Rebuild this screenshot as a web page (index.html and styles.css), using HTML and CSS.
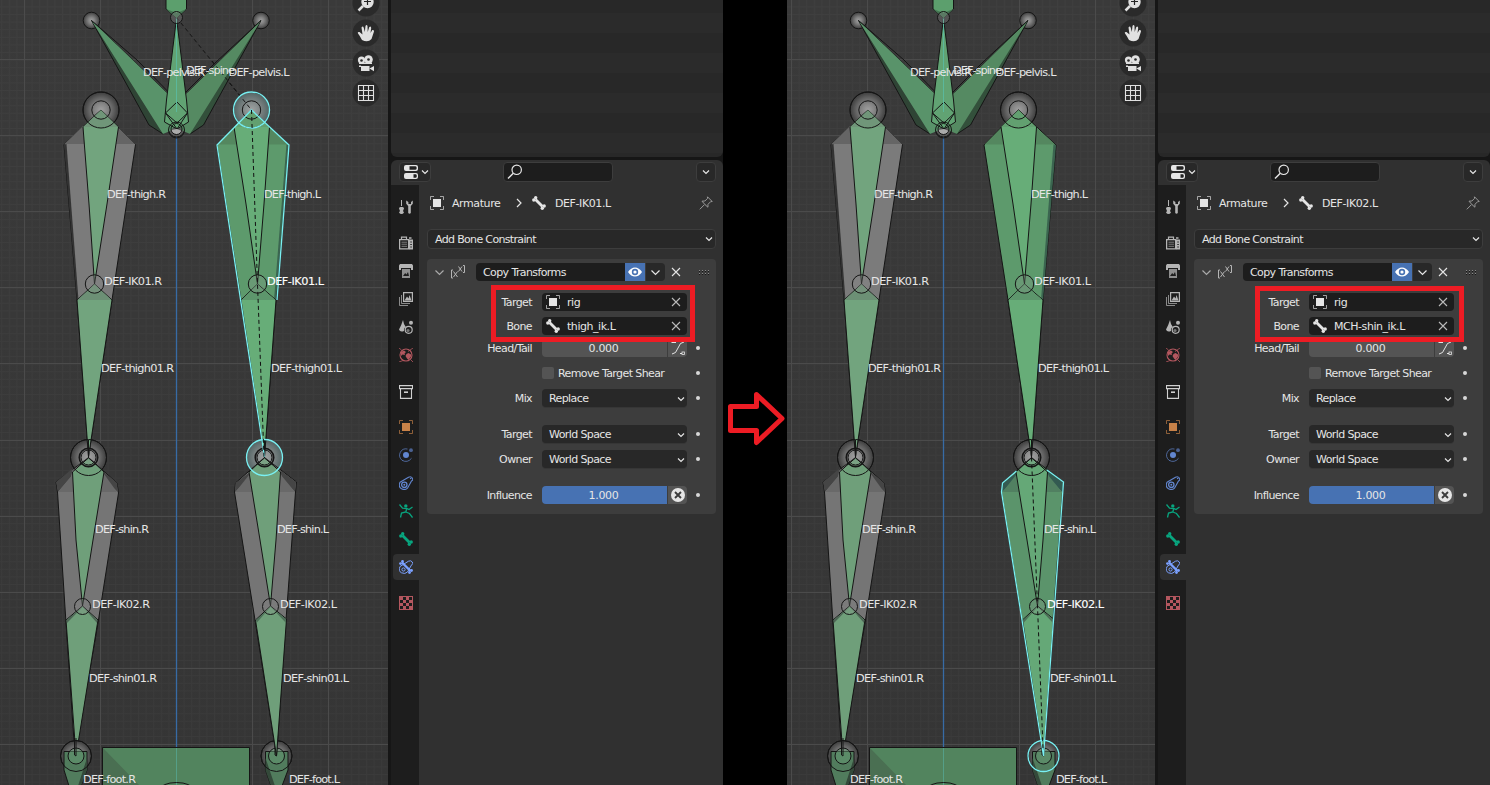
FILE: index.html
```html
<!DOCTYPE html>
<html lang="en">
<head>
<meta charset="utf-8">
<title>Copy Transforms bone constraint</title>
<link rel="stylesheet" href="styles.css">
</head>
<body>
<svg class="defs" width="0" height="0" aria-hidden="true">
  <defs>
    <radialGradient id="ball"><stop offset="0" stop-color="#a0a0a0"/><stop offset=".35" stop-color="#858585"/><stop offset=".7" stop-color="#606060"/><stop offset="1" stop-color="#3c3c3c"/></radialGradient>
    <radialGradient id="ballSel"><stop offset="0" stop-color="#a0a4a4"/><stop offset=".5" stop-color="#7e8585"/><stop offset="1" stop-color="#526464"/></radialGradient>
    <linearGradient id="ground" x2="0" y2="1"><stop offset="0" stop-color="#3a3a3a"/><stop offset="1" stop-color="#353535"/></linearGradient>
    <pattern id="fine" x="24" y="59.6" width="7.6" height="7.6" patternUnits="userSpaceOnUse"><path d="M0 .5H7.6M.5 0V7.6" stroke="#fff" stroke-opacity=".022" stroke-width="1" fill="none"/></pattern>

    <symbol id="i-object" viewBox="0 0 14 14"><path d="M.5 4V.5H4M10 .5h3.5V4M13.500 10v3.500H10M4 13.500H.5V10" fill="none" stroke="currentColor" opacity=".65"/><rect x="3" y="3" width="8" height="8" fill="currentColor"/></symbol>
    <symbol id="i-bone" viewBox="0 0 14 14"><path d="M3.500 3.500 10.500 10.500" stroke="currentColor" stroke-width="2.800"/><g fill="currentColor"><circle cx="3.700" cy="1.800" r="1.700"/><circle cx="1.800" cy="4" r="1.700"/><circle cx="10.300" cy="12.200" r="1.700"/><circle cx="12.200" cy="10" r="1.700"/></g></symbol>
    <symbol id="i-down" viewBox="0 0 8 8"><path d="M1 2.500 4 5.500 7 2.500" fill="none" stroke="currentColor" stroke-width="1.200"/></symbol>
    <symbol id="i-down-wide" viewBox="0 0 11 11"><path d="M1.500 3.500 5.500 7.500 9.500 3.500" fill="none" stroke="currentColor" stroke-width="1.200"/></symbol>
    <symbol id="i-x" viewBox="0 0 10 10"><path d="M1 1 9 9M9 1 1 9" stroke="currentColor" stroke-width="1.100"/></symbol>
    <symbol id="i-search" viewBox="0 0 16 16"><circle cx="9.700" cy="5.800" r="4.700" fill="none" stroke="currentColor" stroke-width="1.200"/><path d="M6.300 9.200 1 14.500" stroke="currentColor" stroke-width="1.500"/></symbol>
    <symbol id="i-pin" viewBox="0 0 14 14"><path d="M8.500.8 13.200 5.500 11.600 5.700 9 8.300 8.900 11.200 6 8.600 3 5.200 5.900 5 8.500 2.400zM5.600 8.500.8 13.300" fill="none" stroke="currentColor"/></symbol>
    <symbol id="i-props" viewBox="0 0 14 14"><rect width="14" height="6" rx="2" fill="currentColor"/><rect y="8" width="14" height="6" rx="2" fill="currentColor"/><path d="M5.500 1.300h6q1.200 0 1.200 1.700t-1.200 1.700h-6zM9.500 9.300h2.300q1 0 1 1.700t-1 1.700H9.500z" fill="#222"/></symbol>
    <symbol id="i-tool" viewBox="0 0 14 14"><path d="M2.500 0V6" stroke="currentColor"/><path d="M0 8.500Q0 7 1.500 7h2Q5 7 5 8.500L4 11l1 1.500Q4 14 2.500 14T0 12.500L1 11z" fill="currentColor"/><path d="M7.200.5v3.200L9.200 6v7q1.300 1.600 2.600 0V6l2-2.300V.5L12 2v2h-2.600V2z" fill="currentColor"/></symbol>
    <symbol id="i-render" viewBox="0 0 14 14"><path d="M.6 3.600h9v9.300h-9z" fill="none" stroke="currentColor" stroke-width="1.300"/><path d="M2.500 3.500V1.200h5v2.300" fill="none" stroke="currentColor" stroke-width="1.200"/><path d="M2.500 6.200h5.500M2.500 8.200h5.500M2.500 10.300h5.500" stroke="currentColor" stroke-width=".9" opacity=".7"/><path d="M10 3.500h4v10h-4z" fill="currentColor"/><path d="M11.300 6h1.500M11.300 8.500h1.500M11.300 11h1.500" stroke="#222" stroke-width="1.200"/><path d="M10 1.300h2.500v1.500H10z" fill="currentColor"/></symbol>
    <symbol id="i-output" viewBox="0 0 14 14"><path d="M1 0h12l1 1.500V6h-2V4H2v2H0V1.500z" fill="currentColor"/><path d="M3 5h8v9H3z" fill="currentColor" opacity=".75"/><path d="M4 12 6.200 9l1.200 1.500L9 8l1 4z" fill="#1d1d1d"/></symbol>
    <symbol id="i-layers" viewBox="0 0 14 14"><path d="M4.600.6h8.800v8.800H4.600z" fill="none" stroke="currentColor" stroke-width="1.200"/><path d="M5.500 8.500 8 4.500 9.500 6.500 10.500 3 12.500 8.500z" fill="currentColor"/><path d="M2.500 3v8.500H11M.5 5v8.500H9" fill="none" stroke="currentColor" stroke-width=".9" opacity=".8"/></symbol>
    <symbol id="i-scene" viewBox="0 0 14 14"><path d="M4 0Q4.500 4 6.800 7 4.500 8 5 11 1 12.500 0 9.500 2.500 5 4 0z" fill="currentColor"/><circle cx="12" cy="2.800" r="2" fill="currentColor"/><circle cx="9.700" cy="9.800" r="3.500" fill="none" stroke="currentColor" stroke-width="1.200"/><circle cx="9" cy="10.500" r="1.600" fill="#777"/></symbol>
    <symbol id="i-world" viewBox="0 0 14 14"><circle cx="7" cy="7" r="6" fill="none" stroke="currentColor" stroke-width="1.100"/><path d="M2 4 5 2.500 7 4 5.500 5.500 6 7 3.500 6.500 2 8zM7.500 6 9.500 5l2.500 1.500v2L9.500 12 8 10.500 6.500 8z" fill="currentColor"/><path d="M0 0 2.500 2M14 0 9 3.500M0 14l4-1.500M14 14l-2.500-2.500" stroke="currentColor" opacity=".8"/></symbol>
    <symbol id="i-collection" viewBox="0 0 14 14"><path d="M.5.600h13v3H.5zM1.500 4v9.400h11V4" fill="none" stroke="currentColor" stroke-width="1.100"/><path d="M5 7.200h4" stroke="currentColor" stroke-width="1.600"/></symbol>
    <symbol id="i-physics" viewBox="0 0 14 14"><circle cx="7" cy="7" r="3" fill="currentColor"/><path d="M8.500 1Q3.500 0 1.300 4.300T3 12.300q5.500 3 9.500-2" fill="none" stroke="currentColor" opacity=".7"/><circle cx="12" cy="2.200" r="1.900" fill="currentColor" opacity=".65"/></symbol>
    <symbol id="i-constraint" viewBox="0 0 14 14"><circle cx="5.300" cy="8.800" r="2.700" fill="none" stroke="currentColor" stroke-width="1.300"/><circle cx="5.300" cy="8.800" r="1" fill="currentColor"/><path d="M1 6.300 9.500 1.200Q12 0 13.300 2T12.500 5L8.500 12.200Q6 14.500 2.500 12.800T1 6.300z" fill="none" stroke="currentColor" stroke-width="1.100"/><circle cx="11.700" cy="2.500" r=".8" fill="currentColor"/></symbol>
    <symbol id="i-data" viewBox="0 0 14 14"><circle cx="6.800" cy="1.900" r="1.700" fill="currentColor"/><path d="M.5.500 3.500 4.200 7.800 4.500 10 5.500 13.500 3M7.800 4.500 6.800 8 2.500 9 1.500 13.500M6.800 8 10.500 9.500 13.500 13.500" fill="none" stroke="currentColor" stroke-width="1.300"/></symbol>
    <symbol id="i-bcon" viewBox="0 0 14 14"><path d="M1 6.500 9.500 1.200Q12 0 13.300 2T12.500 5L8.500 12Q6 14.500 2.500 12.800T1 6.500z" fill="none" stroke="currentColor" stroke-width="1"/><path d="M3 2.500 11.500 11" stroke="currentColor" stroke-width="2.400"/><g fill="currentColor"><circle cx="3.500" cy="1.500" r="1.400"/><circle cx="1.500" cy="3.600" r="1.400"/><circle cx="10.500" cy="12.500" r="1.400"/><circle cx="12.500" cy="10.500" r="1.400"/></g><circle cx="4.500" cy="9.500" r="1.600" fill="none" stroke="currentColor"/></symbol>
    <symbol id="i-texture" viewBox="0 0 14 14"><rect x=".5" y=".5" width="13" height="13" fill="none" stroke="currentColor"/><path d="M1 1h3v3H1zM7 1h3v3H7zM4 4h3v3H4zM10 4h3v3h-3zM1 7h3v3H1zM7 7h3v3H7zM4 10h3v3H4zM10 10h3v3h-3z" fill="currentColor"/></symbol>
    <symbol id="i-eye" viewBox="0 0 14 10"><path d="M0 5Q3 .5 7 .5T14 5Q11 9.500 7 9.500T0 5z" fill="#fff"/><circle cx="7" cy="5" r="3.200" fill="#4772b3"/><circle cx="7" cy="5" r="1.600" fill="#fff"/></symbol>
    <symbol id="i-var" viewBox="0 0 16 14"><path d="M3 5H1.500V13H3M13 .5H14.500V7.500H13M3.500 6.500 7.500 12M7.500 6.500 3.500 12M8.500 1.500 12 6.500M12 1.500 8.500 6.500" fill="none" stroke="currentColor"/></symbol>
    <symbol id="i-curve" viewBox="0 0 14 14"><path d="M1 13Q5 13 7 7T13 1M.5 1.500H5M9 12.500h2" fill="none" stroke="currentColor"/><rect x="11" y="11" width="2.500" height="2.500" fill="none" stroke="currentColor" stroke-width=".8"/></symbol>
    <symbol id="i-clear" viewBox="0 0 14 14"><circle cx="7" cy="7" r="7" fill="#e6e6e6"/><path d="M4 4 10 10M10 4 4 10" stroke="#3d3d3d" stroke-width="1.900"/></symbol>
    <symbol id="i-drag" viewBox="0 0 11 5"><path d="M0 .5H11M0 3.500H11" stroke="#8a8a8a" stroke-dasharray="1 2"/><path d="M0 1.500H11M0 4.500H11" stroke="#161616" stroke-dasharray="1 2"/></symbol>

    <!-- everything both views share behind the left leg -->
    <g id="backdrop">
      <rect width="388" height="785" fill="url(#ground)"/>
      <rect width="388" height="785" fill="url(#fine)"/>
      <path d="M24.500 0V785M100.500 0V785M252.500 0V785M328.500 0V785M0 59.500H388M0 135.500H388M0 211.500H388M0 287.500H388M0 363.500H388M0 440.500H388M0 516.500H388M0 592.500H388M0 668.500H388M0 744.500H388" stroke="#4b4b4b" fill="none"/>
      <path d="M176.500 0V785" stroke="#376ba5" stroke-width="1.300"/>
    </g>
    <g id="hips" stroke="#151515" stroke-width="1">
      <circle cx="91.500" cy="20.500" r="8.300" fill="url(#ball)"/><circle cx="261" cy="20.500" r="8.300" fill="url(#ball)"/>
      <circle cx="176.500" cy="129" r="8" fill="#555"/>
      <path d="M91.500 20.500 149 125 163 134 188 112 166 92Z" fill="#2f4435"/>
      <path d="M91.500 20.500 163 134 170 131 188 113 166 92Z" fill="#59936a" stroke="none"/>
      <path d="M91.500 20.500 137 60 188 112" fill="none"/>
      <path d="M261 20.500 203.500 125 190 134 166 112 188 92Z" fill="#33503b"/>
      <path d="M261 20.500 190 134 183 131 166 112 188 92Z" fill="#558a62" stroke="none"/>
      <path d="M261 20.500 215 63 166 112" fill="none"/>
      <path d="M176.500 18 186.500 100 188.500 122 177 129 164.500 122 166.500 100 Z" fill="#61a373"/>
      <path d="M165.500 113 177 102 187.500 113 177 123ZM165.500 113 177 129 187.500 113" fill="none"/>
      <path d="M176.500 18V112" stroke="#5bb89c"/>
      <path d="M166 -1V9L176.500 18 186.500 9V-1Z" fill="#5c9f6d"/>
      <path d="M166 9 176.500 13 186.500 9 176.500 18Z" fill="#447452" stroke="none"/>
      <circle cx="176.500" cy="17.500" r="6" fill="#888" fill-opacity=".35"/>
      <path d="M171 130a6 6 0 0 0 11 1L177 129Z" fill="#aaa" stroke="none"/>
      <circle cx="176.500" cy="129" r="5.500" fill="none"/><circle cx="176.500" cy="130" r="8" fill="none"/>
    </g>
    <g id="legR" stroke="#151515" stroke-width="1">
      <circle cx="101" cy="110" r="18" fill="url(#ball)"/>
      <circle cx="88.500" cy="457.500" r="18" fill="url(#ball)"/>
      <path d="M101 110 135.500 144.500 112 300 88.500 457 77 300 64 144.500Z" fill="#7b7b7b"/>
      <path d="M64 144.500 66.500 144 78.500 300 77 300Z" fill="#333" stroke="none"/>
      <path d="M64.500 144 83 126 102 144ZM135 144 118 127 102 144Z" fill="#656565" stroke="none"/>
      <path d="M101 110 118.500 127 107 204 94.500 284 89 204 83 127Z" fill="#72a47e"/>
      <path d="M101 110 118 127H83Z" fill="#709679" stroke="none"/>
      <path d="M94.500 284 112 300 88.500 457 77 300Z" fill="#72a47e"/>
      <path d="M94.500 284.500 111.500 300H77.500Z" fill="#6c9075" stroke="none"/>
      <circle cx="94.500" cy="284" r="9.200" fill="#999" fill-opacity=".2"/>
      <circle cx="101" cy="110" r="18" fill="none"/><circle cx="101" cy="110" r="9.200" fill="none"/>
    </g>
    <g id="shinR" stroke="#151515">
      <path d="M88.500 457.500 117 483 118.500 493 98 623 75 756 66 623 57.500 492 56 482Z" fill="#757575"/>
      <path d="M56 482 73 468 71 477 58 492ZM117 483 104 472 104 480 118 492Z" fill="#454545" stroke="none"/>
      <path d="M73 474 58 492H117L104 474Z" fill="#696969" stroke="none"/>
      <path d="M88.500 457.500 104 472 93 540 82.500 606 76 540 72.500 472Z" fill="#6f9f7a"/>
      <path d="M82.500 606 98 620 97 626 76 756 66 620Z" fill="#6f9f7a"/>
      <path d="M66.500 620 82.500 607 67 623ZM97 620 83 607 97 623Z" fill="#4d6555" stroke="none"/>
      <circle cx="82.500" cy="606.500" r="8" fill="#999" fill-opacity=".18"/>
      <circle cx="88.500" cy="457.500" r="9.200" fill="#aaa" fill-opacity=".2" stroke-width="1.700"/><circle cx="88.500" cy="457.500" r="7.500" fill="none"/>
      <path d="M88.500 440V458L80 465M88.500 458 97 465" fill="none"/>
      <circle cx="88.500" cy="457.500" r="18" fill="none"/>
    </g>
    <g id="feet" stroke="#151515">
      <path d="M102.500 747.500H249.500V786H102.500Z" fill="#52845e"/><path d="M103 748 140 786H103Z" fill="#4a6f52" stroke="none"/>
      <path d="M176.500 748V786" stroke="#559f88"/><ellipse cx="176.500" cy="790" rx="17" ry="7.500" fill="none"/>
      <circle cx="76" cy="756" r="15.500" fill="url(#ball)"/><circle cx="276.500" cy="756" r="15.500" fill="url(#ball)"/>
      <path d="M64 751.500H87V770L81 786H69L64 770ZM265.500 751.500H288V770L282 786H271L265.500 770Z" fill="#517c5d"/>
      <path d="M87 758V770L81 786H78ZM265.500 758V770L271 786H275Z" fill="#34493a" stroke="none"/>
      <circle cx="76" cy="756" r="8" fill="#669a73" fill-opacity=".5"/><circle cx="276.500" cy="756" r="8" fill="#669a73" fill-opacity=".5"/>
      <circle cx="76" cy="756" r="15.500" fill="none"/><circle cx="276.500" cy="756" r="15.500" fill="none"/>
      <path d="M74.500 738V755L76 756V738M275 738V755L276.500 756V738" fill="none"/>
    </g>
    <g id="thighL" stroke="#151515">
      <path d="M251.500 110 289 145 276 300 264.500 457 241 300 217 145Z" fill="#5d9a6c"/>
      <path d="M286.500 144 289 145 276 300H274Z" fill="#3b6550" stroke="none"/>
      <path d="M217.500 144.500 235 127 251 144.500ZM288 144.500 269 127 252 144.500Z" fill="#54875f" stroke="none"/>
      <path d="M251.500 110 269.500 127 264 204 257.500 284 246 204 234 127Z" fill="#67ad78"/>
      <path d="M251.500 110 269 127H234Z" fill="#62a070" stroke="none"/>
      <path d="M257.500 284 276 300 264.500 457 241 300Z" fill="#67ad78"/>
      <path d="M257.500 284.500 275.500 300H241.500Z" fill="#5d966c" stroke="none"/>
      <circle cx="257.500" cy="284" r="9.200" fill="#999" fill-opacity=".2"/>
      <circle cx="251.500" cy="110" r="18" fill="none"/><circle cx="251.500" cy="110" r="9.200" fill="none"/>
    </g>
    <g id="shinL" stroke="#151515">
      <path class="shin-outer" d="M264.500 457.500 296.500 482 295.500 492 286 620 276.500 756 255 620 234.500 492 235.500 483Z"/>
      <path d="M235.500 483 250 472 249 478 235 492ZM296 482 280 470 282 478 295 492Z" class="shin-dark" stroke="none"/>
      <path d="M249 475 235.500 492H295L281 475Z" class="shin-top" stroke="none"/>
      <path d="M264.500 457.500 280.500 472 276 540 270.500 606 260 540 249 472Z" class="shin-core"/>
      <path d="M270.500 606 286.500 619 276.500 756 255.500 620Z" class="shin-core"/>
      <path d="M256 620 270.500 607 256.500 623ZM286 619 271 607 286 623Z" fill="#4d6f58" stroke="none"/>
      <circle cx="270.500" cy="606.500" r="8" fill="#999" fill-opacity=".18"/>
    </g>
    <g id="kneeL" stroke="#151515">
      <circle cx="264.500" cy="457.500" r="9.200" fill="#aaa" fill-opacity=".2" stroke-width="1.700"/><circle cx="264.500" cy="457.500" r="7.500" fill="none"/>
      <path d="M264.500 440V458L256 465M264.500 458 273 465" fill="none"/>
    </g>
    <g id="gizmos">
      <g fill="#2a2a2a"><circle cx="366" cy="3" r="13.500"/><circle cx="366" cy="33" r="13.500"/><circle cx="366" cy="63" r="13.500"/><circle cx="366" cy="93" r="13.500"/></g>
      <g fill="#e0e0e0">
        <path d="M358.500 10.500 363 6" stroke="#e0e0e0" stroke-width="2.500"/><circle cx="367.500" cy="2" r="6.200"/><path d="M364 1.500h7M367.500-2v7" stroke="#222" stroke-width="1.200"/>
        <path d="M362 40Q360 36 358 33.500 357 31.500 359.500 32L362.500 34.500 361.500 27.500Q363 25.500 363.800 28L364.800 32 365.500 26Q366.500 24 367.500 26L367.700 32 369.300 27Q371 25.500 371.200 28L370.500 33 372.300 30Q374.300 29.500 374 31.500L371.500 39Q368 43 362 40Z"/>
        <circle cx="361.500" cy="60" r="3.600"/><circle cx="368.500" cy="59.500" r="4.300"/><path d="M359 62.500h13v1.500H359zM361 66h8.500v5H361zM369.500 68.500 374 66v5.200zM359 65.500h2v1.500h-2z"/><circle cx="361.500" cy="60.500" r="1.300" fill="#2a2a2a"/><circle cx="368.500" cy="59.500" r="1.300" fill="#2a2a2a"/>
        <path d="M358.500 85.500h15v15h-15zM363.500 85.500v15M368.500 85.500v15M358.500 90.500h15M358.500 95.500h15" fill="none" stroke="#e0e0e0" stroke-width="1.100"/>
      </g>
    </g>
    <g id="labels" class="bone-label">
      <text x="143" y="76" textLength="62">DEF-pelvis.R</text><text x="186" y="74" textLength="49">DEF-spine</text><text x="228.500" y="76" textLength="61">DEF-pelvis.L</text>
      <text x="107" y="198" textLength="59">DEF-thigh.R</text><text x="264" y="198" textLength="57">DEF-thigh.L</text>
      <text x="104" y="285" textLength="58">DEF-IK01.R</text>
      <text x="101" y="372" textLength="73">DEF-thigh01.R</text><text x="271" y="372" textLength="71">DEF-thigh01.L</text>
      <text x="95" y="533" textLength="54">DEF-shin.R</text><text x="277" y="533" textLength="52">DEF-shin.L</text>
      <text x="92" y="608" textLength="58">DEF-IK02.R</text>
      <text x="89" y="682" textLength="68">DEF-shin01.R</text><text x="283" y="682" textLength="66">DEF-shin01.L</text>
      <text x="83" y="783" textLength="53">DEF-foot.R</text><text x="289" y="783" textLength="51">DEF-foot.L</text>
    </g>
  </defs>
</svg>

<main class="comparison">
  <section class="shot">
    <svg class="viewport" viewBox="0 0 388 785">
      <use href="#backdrop"/><path d="M176.500 17.500 251.500 110" stroke="#151515" stroke-dasharray="4 3"/><use href="#hips"/>
      <use href="#legR"/><use href="#shinR"/><use href="#feet"/>
      <circle cx="251.500" cy="110" r="18" fill="url(#ballSel)"/><circle cx="264.500" cy="457.500" r="18" fill="url(#ballSel)"/>
      <path d="M212 61 251.500 110" stroke="#151515" stroke-dasharray="4 3"/>
      <use href="#thighL"/><use href="#shinL"/><use href="#kneeL"/>
      <path class="select" d="M264.500 457 217 145 251.500 110 289 145 277 300"/>
      <circle class="select" cx="251.500" cy="110" r="18"/><circle class="select" cx="264.500" cy="457.500" r="18"/>
      <path d="M251.500 110 257.500 284 264 457" stroke="#111" stroke-dasharray="4 3" fill="none"/>
      <use href="#gizmos"/><use href="#labels"/>
      <g class="bone-label"><text class="active" x="267" y="285" textLength="57">DEF-IK01.L</text><text x="280" y="608" textLength="57">DEF-IK02.L</text></g>
    </svg>
    <div class="editors">
      <div class="outliner"></div>
      <div class="properties">
        <header class="bar"><span class="btn editor-type"><svg class="ic"><use href="#i-props"/></svg><svg class="dn"><use href="#i-down"/></svg></span><span class="search"><svg><use href="#i-search"/></svg></span><span class="btn options"><svg class="dn"><use href="#i-down"/></svg></span></header>
        <div class="body">
          <nav class="tabs">
            <svg class="tool"><use href="#i-tool"/></svg><svg><use href="#i-render"/></svg><svg><use href="#i-output"/></svg><svg><use href="#i-layers"/></svg><svg><use href="#i-scene"/></svg><svg class="red"><use href="#i-world"/></svg><svg class="coll"><use href="#i-collection"/></svg><svg class="orange first"><use href="#i-object"/></svg><svg class="blue"><use href="#i-physics"/></svg><svg class="blue"><use href="#i-constraint"/></svg><svg class="green"><use href="#i-data"/></svg><svg class="green"><use href="#i-bone"/></svg><span class="current"><svg><use href="#i-bcon"/></svg></span><svg class="red last"><use href="#i-texture"/></svg>
          </nav>
          <div class="content">
            <div class="crumbs"><svg class="ic"><use href="#i-object"/></svg><span class="c1">Armature</span><svg class="gt" viewBox="0 0 6 10"><path d="M1 1 5 5 1 9" fill="none" stroke="currentColor" stroke-width="1.200"/></svg><svg class="ic"><use href="#i-bone"/></svg><span class="c2">DEF-IK01.L</span><svg class="ic pin"><use href="#i-pin"/></svg></div>
            <div class="add"><span>Add Bone Constraint</span><svg class="dn"><use href="#i-down"/></svg></div>
            <div class="panel">
              <div class="head"><svg class="fold"><use href="#i-down-wide"/></svg><svg class="var"><use href="#i-var"/></svg><span class="name">Copy Transforms</span><span class="eye"><svg><use href="#i-eye"/></svg></span><span class="more"><svg><use href="#i-down-wide"/></svg></span><svg class="x"><use href="#i-x"/></svg><svg class="drag"><use href="#i-drag"/></svg></div>
              <div class="row"><label>Target</label><span class="field"><svg class="ic"><use href="#i-object"/></svg><span>rig</span><svg class="x"><use href="#i-x"/></svg></span></div>
              <div class="row bone"><label>Bone</label><span class="field"><svg class="ic"><use href="#i-bone"/></svg><span>thigh_ik.L</span><svg class="x"><use href="#i-x"/></svg></span></div>
              <div class="row headtail"><label>Head/Tail</label><span class="num">0.000</span><span class="side"><svg class="ic"><use href="#i-curve"/></svg></span><i></i></div>
              <div class="row shear"><label></label><span class="check"></span><span class="checktext">Remove Target Shear</span><i></i></div>
              <div class="row mix"><label>Mix</label><span class="menu">Replace<svg class="dn"><use href="#i-down"/></svg></span><i></i></div>
              <div class="row target"><label>Target</label><span class="menu">World Space<svg class="dn"><use href="#i-down"/></svg></span><i></i></div>
              <div class="row owner"><label>Owner</label><span class="menu">World Space<svg class="dn"><use href="#i-down"/></svg></span><i></i></div>
              <div class="row influence"><label>Influence</label><span class="num full">1.000</span><span class="side"><svg class="ic"><use href="#i-clear"/></svg></span><i></i></div>
            </div>
          </div>
        </div>
      </div>
    </div>
    <div class="mark mark-a"></div>
  </section>

  <div class="between"><svg viewBox="0 0 64 64"><path d="M7.500 20.500H33.500V8.500L59 32.500 33.500 56.500V44.500H7.500Z" fill="none" stroke="#ed1c24" stroke-width="5" stroke-linejoin="round"/></svg></div>

  <section class="shot cropped">
    <svg class="viewport" viewBox="0 0 388 785">
      <use href="#backdrop"/><use href="#hips"/><use href="#legR"/><use href="#shinR"/><use href="#feet"/>
      <circle cx="251.500" cy="110" r="18" fill="url(#ball)" stroke="#151515"/><circle cx="264.500" cy="457.500" r="18" fill="url(#ball)" stroke="#151515"/>
      <use href="#thighL"/><g class="selected-shin"><use href="#shinL"/></g>
      <path class="select" d="M249.500 471 235.500 483 234.500 492 255 620 276.500 756 286.500 620 296.500 482 280 470"/>
      <circle class="select" cx="276.500" cy="756" r="15.500"/>
      <circle cx="264.500" cy="457.500" r="18" stroke="#151515" fill="none"/><use href="#kneeL"/>
      <path d="M264.500 457.500 270.500 606 276 748" stroke="#111" stroke-dasharray="4 3" fill="none"/>
      <use href="#gizmos"/><use href="#labels"/>
      <g class="bone-label"><text x="267" y="285" textLength="57">DEF-IK01.L</text><text class="active" x="280" y="608" textLength="57">DEF-IK02.L</text></g>
    </svg>
    <div class="editors">
      <div class="outliner"></div>
      <div class="properties">
        <header class="bar"><span class="btn editor-type"><svg class="ic"><use href="#i-props"/></svg><svg class="dn"><use href="#i-down"/></svg></span><span class="search"><svg><use href="#i-search"/></svg></span><span class="btn options"><svg class="dn"><use href="#i-down"/></svg></span></header>
        <div class="body">
          <nav class="tabs">
            <svg class="tool"><use href="#i-tool"/></svg><svg><use href="#i-render"/></svg><svg><use href="#i-output"/></svg><svg><use href="#i-layers"/></svg><svg><use href="#i-scene"/></svg><svg class="red"><use href="#i-world"/></svg><svg class="coll"><use href="#i-collection"/></svg><svg class="orange first"><use href="#i-object"/></svg><svg class="blue"><use href="#i-physics"/></svg><svg class="blue"><use href="#i-constraint"/></svg><svg class="green"><use href="#i-data"/></svg><svg class="green"><use href="#i-bone"/></svg><span class="current"><svg><use href="#i-bcon"/></svg></span><svg class="red last"><use href="#i-texture"/></svg>
          </nav>
          <div class="content">
            <div class="crumbs"><svg class="ic"><use href="#i-object"/></svg><span class="c1">Armature</span><svg class="gt" viewBox="0 0 6 10"><path d="M1 1 5 5 1 9" fill="none" stroke="currentColor" stroke-width="1.200"/></svg><svg class="ic"><use href="#i-bone"/></svg><span class="c2">DEF-IK02.L</span><svg class="ic pin"><use href="#i-pin"/></svg></div>
            <div class="add"><span>Add Bone Constraint</span><svg class="dn"><use href="#i-down"/></svg></div>
            <div class="panel">
              <div class="head"><svg class="fold"><use href="#i-down-wide"/></svg><svg class="var"><use href="#i-var"/></svg><span class="name">Copy Transforms</span><span class="eye"><svg><use href="#i-eye"/></svg></span><span class="more"><svg><use href="#i-down-wide"/></svg></span><svg class="x"><use href="#i-x"/></svg><svg class="drag"><use href="#i-drag"/></svg></div>
              <div class="row"><label>Target</label><span class="field"><svg class="ic"><use href="#i-object"/></svg><span>rig</span><svg class="x"><use href="#i-x"/></svg></span></div>
              <div class="row bone"><label>Bone</label><span class="field"><svg class="ic"><use href="#i-bone"/></svg><span>MCH-shin_ik.L</span><svg class="x"><use href="#i-x"/></svg></span></div>
              <div class="row headtail"><label>Head/Tail</label><span class="num">0.000</span><span class="side"><svg class="ic"><use href="#i-curve"/></svg></span><i></i></div>
              <div class="row shear"><label></label><span class="check"></span><span class="checktext">Remove Target Shear</span><i></i></div>
              <div class="row mix"><label>Mix</label><span class="menu">Replace<svg class="dn"><use href="#i-down"/></svg></span><i></i></div>
              <div class="row target"><label>Target</label><span class="menu">World Space<svg class="dn"><use href="#i-down"/></svg></span><i></i></div>
              <div class="row owner"><label>Owner</label><span class="menu">World Space<svg class="dn"><use href="#i-down"/></svg></span><i></i></div>
              <div class="row influence"><label>Influence</label><span class="num full">1.000</span><span class="side"><svg class="ic"><use href="#i-clear"/></svg></span><i></i></div>
            </div>
          </div>
        </div>
      </div>
    </div>
    <div class="mark mark-b"></div>
  </section>
</main>
</body>
</html>
```
FILE: styles.css
```css
* { box-sizing: border-box; }
body { margin: 0; background: #000; font: 11px/18px "DejaVu Sans", sans-serif; color: #e5e5e5; overflow: hidden; letter-spacing: -.6px; }
svg { display: block; flex: none; }
.defs { position: absolute; }
.comparison { display: flex; width: 1490px; height: 785px; overflow: hidden; }
.shot { position: relative; display: flex; flex: none; width: 723px; height: 785px; background: #161616; }
.cropped { margin-left: -20px; clip-path: inset(0 0 0 20px); }
.between { flex: none; width: 64px; padding-top: 386px; }
.between svg { width: 64px; height: 64px; }
.viewport { width: 388px; height: 785px; }
.bone-label { font: 11.300px "DejaVu Sans", sans-serif; fill: #e6e6e6; letter-spacing: 0; }
.active { fill: #fff; stroke: #fff; stroke-width: .12px; }
.select { fill: none; stroke: #79f0f2; stroke-width: 1.3px; }
.shin-outer { fill: var(--outer, #757575); }
.shin-dark { fill: var(--dark, #454545); }
.shin-top { fill: var(--top, #696969); }
.shin-core { fill: var(--core, #6f9f7a); }
.selected-shin { --outer: #5b946b; --dark: #335a51; --top: #518061; --core: #65a877; }

.editors { display: flex; flex-direction: column; gap: 3px; width: 332px; margin-left: 3px; }
.outliner { height: 157px; border-radius: 0 0 6px 6px; background: repeating-linear-gradient(#282828 0 13px, #2b2b2b 13px 33px, #282828 33px 40px); }
.properties { flex: 1; border-radius: 6px 6px 0 0; background: #303030; overflow: hidden; }
.bar { display: flex; align-items: center; height: 25px; padding: 0 7px 1px 8px; }
.btn, .search, .add { border: 1px solid #3d3d3d; border-radius: 4px; background: #282828; height: 20px; display: flex; align-items: center; }
.editor-type { width: 32px; padding-left: 4px; gap: 3px; }
.search { width: 110px; margin-left: 72px; background: #1d1d1d; padding-left: 3px; }
.search svg { width: 16px; height: 16px; }
.options { width: 20px; margin-left: auto; justify-content: center; }
.ic { width: 14px; height: 14px; }
.dn { width: 8px; height: 8px; }
.x { width: 10px; height: 10px; }
.body { display: flex; height: 600px; }
.tabs { width: 28px; background: #1d1d1d; display: flex; flex-direction: column; align-items: center; padding: 15px 0 0 2px; color: #b5b5b5; gap: 14px; }
.tabs svg { width: 14px; height: 14px; }
.tabs .tool { margin-bottom: 8px; }
.tabs .coll { margin: 9px 0 7px; color: #d0d0d0; }
.red { color: #b4575f; }
.orange { color: #c98248; }
.blue { color: #6286cf; }
.green { color: #08a57f; }
.current { width: 26px; height: 26px; margin: -6px 0; padding: 6px; background: #303030; color: #7ba1ff; border-radius: 4px 0 0 4px; }
.tabs .last { margin-top: 8px; }
.content { flex: 1; padding: 8px 7px 0 8px; }
.crumbs { display: flex; align-items: center; height: 20px; padding-left: 3px; }
.c1 { margin-left: 8px; width: 64px; letter-spacing: -.4px; }
.gt { width: 6px; height: 10px; margin-right: 10px; }
.c2 { margin-left: 9px; letter-spacing: -.4px; }
.c1, .c2, .add span, .field span, .row label, .checktext { padding-top: 2px; }
.pin { margin: 0 3px 0 auto; color: #999; }
.add { margin-top: 16px; padding: 0 2px 0 7px; justify-content: space-between; width: 289px; letter-spacing: -.66px; }
.panel { margin-top: 10px; width: 289px; height: 255px; background: #3d3d3d; border-radius: 4px; padding-top: 4px; }
.head { display: flex; align-items: center; height: 18px; padding-left: 7px; }
.fold { width: 11px; height: 11px; color: #aaa; }
.var { width: 16px; height: 14px; margin: 0 10px 0 5px; color: #b5b5b5; }
.name { width: 149px; height: 18px; padding-left: 7px; line-height: 20px; background: #1d1d1d; border-radius: 4px 0 0 4px; }
.eye { width: 20px; height: 18px; padding: 4px 3px; background: #4772b3; }
.eye svg { width: 14px; height: 10px; }
.more { width: 19px; height: 18px; margin-left: 1px; padding: 4px; background: #282828; border-radius: 0 4px 4px 0; }
.more svg { width: 11px; height: 11px; }
.head .x { margin-left: 6px; }
.drag { width: 11px; height: 5px; margin-left: 18px; }
.row { display: flex; align-items: center; height: 18px; margin-top: 12px; }
.row label { width: 105px; margin-right: 10px; text-align: right; }
.field { width: 145px; height: 18px; display: flex; align-items: center; background: #1d1d1d; border-radius: 4px; padding: 0 6px 0 4px; gap: 7px; letter-spacing: -.45px; }
.field .x { margin-left: auto; color: #bbb; }
.row.bone { margin-top: 6px; }
.headtail { margin-top: 4px; }
.shear { margin-top: 7px; }
.mix { margin-top: 7px; }
.target { margin-top: 18px; }
.owner { margin-top: 7px; }
.influence { margin-top: 18px; }
.num { width: 125px; height: 18px; line-height: 20px; padding-right: 2px; text-align: center; background: #545454; border-radius: 4px 0 0 4px; letter-spacing: -.3px; }
.full { background: #4772b3; }
.side { width: 19px; height: 18px; margin-left: 1px; padding: 2px 3px; background: #545454; border-radius: 0 4px 4px 0; }
.check { width: 12px; height: 12px; background: #545454; border-radius: 2px; }
.checktext { width: 128px; margin-left: 4px; margin-right: 1px; white-space: nowrap; }
.menu { width: 145px; height: 18px; padding: 2px 2px 0 7px; background: #282828; border-radius: 4px; display: flex; align-items: center; justify-content: space-between; box-shadow: 0 1px #363636; }
.row i { width: 4px; height: 4px; border-radius: 50%; background: #d8d8d8; margin-left: 9px; }
.mark { position: absolute; border: 5px solid #ed1c24; }
.mark-a { left: 491px; top: 285px; width: 204px; height: 57px; }
.mark-b { left: 488px; top: 286px; width: 209px; height: 56px; }
```
